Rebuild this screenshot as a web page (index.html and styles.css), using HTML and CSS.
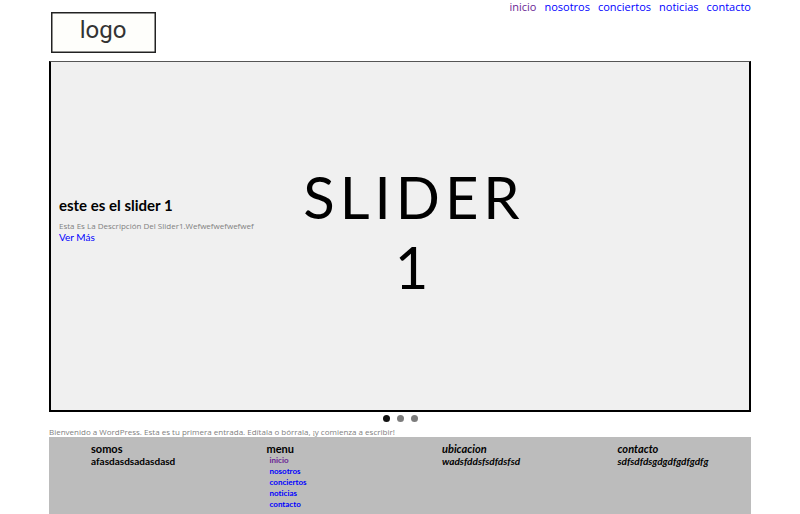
FILE: index.html
```html
<!DOCTYPE html>
<html lang="es">
<head>
<meta charset="utf-8">
<meta name="viewport" content="width=device-width, initial-scale=1">
<title>inicio</title>
<link rel="stylesheet" href="styles.css">
</head>
<body>
<div class="page">
  <header class="header">
    <a class="logo" href="#" aria-label="logo">
      <svg class="logo-art" viewBox="0 0 105 41" role="img" aria-label="logo">
        <rect x="0.75" y="0.75" width="103.5" height="39.5"/>
        <text x="52" y="26" text-anchor="middle">logo</text>
      </svg>
    </a>
    <nav class="nav">
      <a class="visited" href="#">inicio</a>
      <a href="#">nosotros</a>
      <a href="#">conciertos</a>
      <a href="#">noticias</a>
      <a href="#">contacto</a>
    </nav>
  </header>
  <main>
    <section class="slider">
      <div class="caption">
        <h2>este es el slider 1</h2>
        <p>Esta Es La Descripción Del Slider1.Wefwefwefwefwef</p>
        <a href="#">Ver Más</a>
      </div>
      <div class="slide-art">SLIDER<br>1</div>
    </section>
    <div class="dots">
      <button class="dot active" type="button" aria-label="Slider 1"></button>
      <button class="dot" type="button" aria-label="Slider 2"></button>
      <button class="dot" type="button" aria-label="Slider 3"></button>
    </div>
    <p class="entry">Bienvenido a WordPress. Esta es tu primera entrada. Edítala o bórrala, ¡y comienza a escribir!</p>
  </main>
  <footer class="footer">
    <section class="column">
      <h3>somos</h3>
      <p>afasdasdsadasdasd</p>
    </section>
    <section class="column">
      <h3>menu</h3>
      <ul>
        <li><a class="visited" href="#">inicio</a></li>
        <li><a href="#">nosotros</a></li>
        <li><a href="#">conciertos</a></li>
        <li><a href="#">noticias</a></li>
        <li><a href="#">contacto</a></li>
      </ul>
    </section>
    <section class="column italic">
      <h3>ubicacion</h3>
      <p>wadsfddsfsdfdsfsd</p>
    </section>
    <section class="column italic">
      <h3>contacto</h3>
      <p>sdfsdfdsgdgdfgdfgdfg</p>
    </section>
  </footer>
</div>
</body>
</html>
```
FILE: styles.css
```css
* {
  box-sizing: border-box;
  margin: 0;
  padding: 0;
}

body {
  background: #fff;
  color: #000;
  font-family: Lato, "Open Sans", sans-serif;
  font-size: 8px;
  font-variant-ligatures: none;
}

a {
  color: #00f;
  text-decoration: none;
}

.visited {
  color: #6a2594;
}

.page {
  display: flex;
  flex-direction: column;
  min-height: 100vh;
  margin: 0 49px;
}

.header {
  display: flex;
  justify-content: space-between;
  align-items: flex-start;
}

.logo {
  padding: 12px 2px 8px;
}

.logo-art {
  display: block;
  width: 105px;
  height: 41px;
}

.logo-art rect {
  fill: #fefefb;
  stroke: #222;
  stroke-width: 1.5;
}

.logo-art text {
  fill: #333;
  font-family: Roboto, sans-serif;
  font-size: 24px;
}

.nav {
  display: flex;
  gap: 8px;
  font-family: "Open Sans", sans-serif;
  font-size: 11px;
  line-height: 14px;
}

.slider {
  display: grid;
  align-items: center;
  height: 351px;
  border: 2px solid #000;
  border-top: 1px solid #555;
  background: #f0f0f0;
}

.caption,
.slide-art {
  grid-area: 1 / 1;
}

.caption {
  padding: 0 0 34px 8px;
}

.caption h2 {
  margin-bottom: 6px;
  font-size: 15px;
  line-height: 18px;
}

.caption p {
  color: #808080;
  font-family: "Open Sans", sans-serif;
  line-height: 11px;
}

.caption a {
  display: block;
  font-size: 10px;
  line-height: 12px;
}

.slide-art {
  padding: 0 0 8px 28px;
  font-size: 58px;
  letter-spacing: 5px;
  line-height: 70px;
  text-align: center;
}

.dots {
  display: flex;
  justify-content: center;
  gap: 7px;
  padding: 3px 0 5px;
}

.dot {
  width: 7px;
  height: 7px;
  border: 0;
  border-radius: 50%;
  background: #7c7c7c;
}

.dot.active {
  background: #111;
}

.entry {
  color: #808080;
  font-family: "Open Sans", sans-serif;
  line-height: 10px;
}

.footer {
  display: grid;
  flex: 1;
  grid-template-columns: repeat(4, 1fr);
  padding-top: 6px;
  background: #bcbcbc;
  font-weight: 700;
}

.column {
  padding-left: 42px;
}

.column h3 {
  font-size: 11px;
  line-height: 12px;
}

.column p {
  font-size: 10px;
  line-height: 12px;
}

.column ul {
  padding-left: 3px;
  line-height: 11px;
  list-style: none;
}

.italic {
  font-style: italic;
}
```
